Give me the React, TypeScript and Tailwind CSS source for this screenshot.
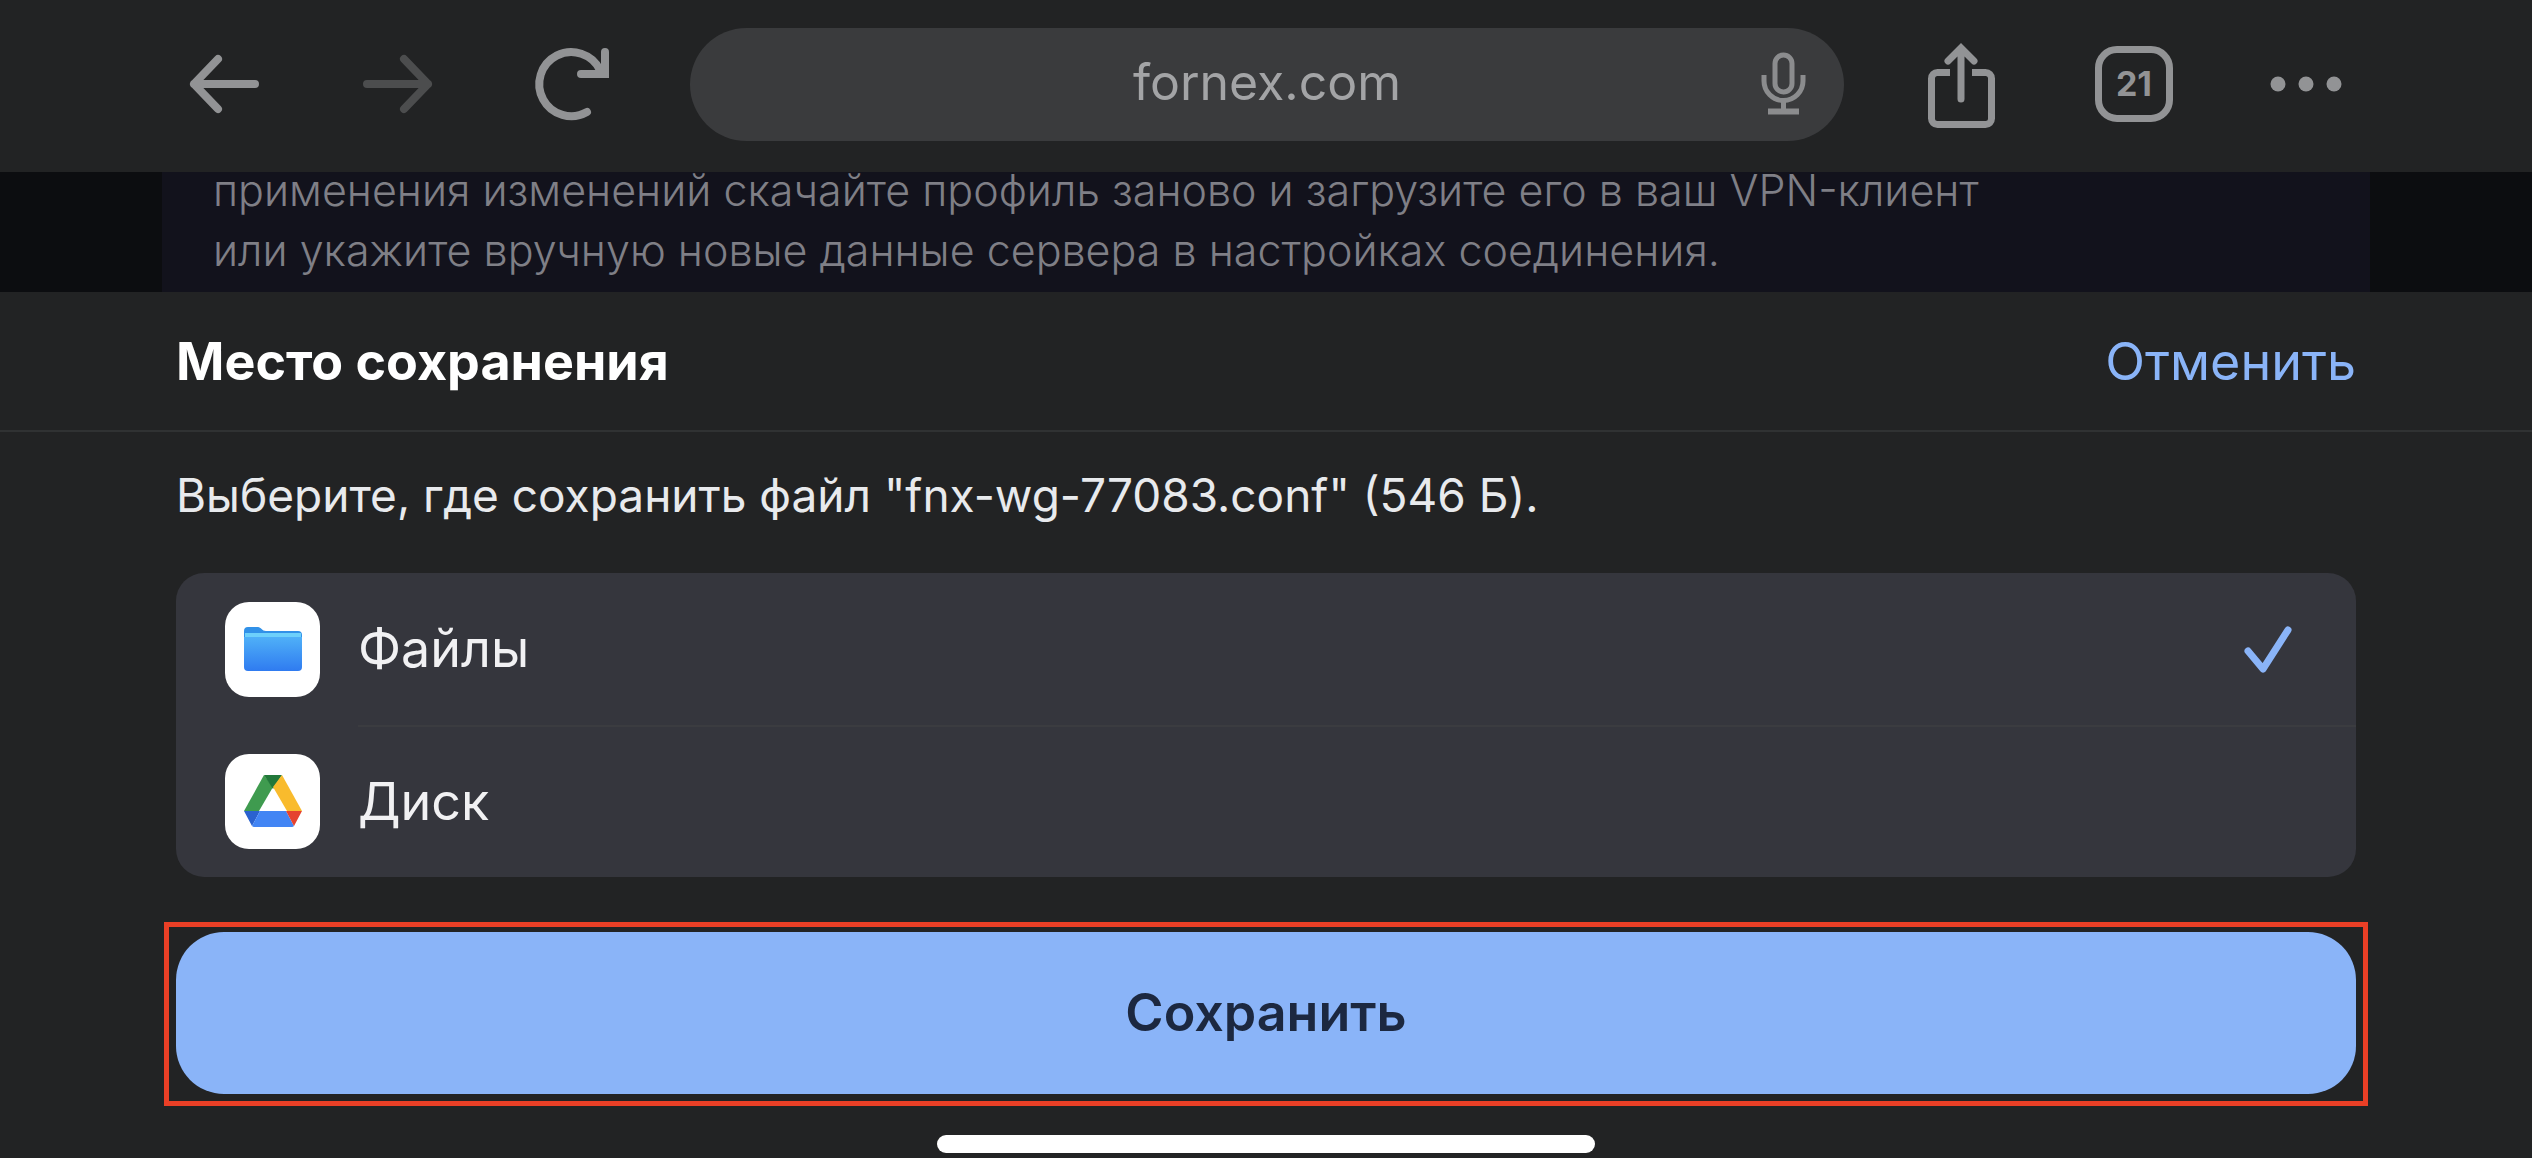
import React, { useState } from 'react';

const BackIcon = () => (
  <svg viewBox="0 0 80 96" className="w-20 h-24" fill="none" stroke="currentColor" strokeWidth="8" strokeLinecap="round" strokeLinejoin="round">
    <path d="M69 48H8M32 23L8 48l24 25" />
  </svg>
);

const ForwardIcon = () => (
  <svg viewBox="0 0 80 96" className="w-20 h-24" fill="none" stroke="currentColor" strokeWidth="8" strokeLinecap="round" strokeLinejoin="round">
    <path d="M8 48h61M45 23l24 25-24 25" />
  </svg>
);

const ReloadIcon = () => (
  <svg viewBox="0 0 80 96" className="w-20 h-24" fill="none" stroke="currentColor" strokeWidth="8" strokeLinecap="round">
    <path d="M55 76A32 32 0 1 1 68 34" />
    <path d="M73 16v22H49" strokeLinejoin="miter" />
    <path d="M74 24v15H59z" fill="currentColor" stroke="none" />
  </svg>
);

const MicIcon = () => (
  <svg viewBox="0 0 48 64" className="w-12 h-16" fill="none" stroke="currentColor" strokeWidth="5">
    <rect x="15" y="3" width="17" height="37" rx="8.5" />
    <path d="M4 23v6a19.5 19.5 0 0 0 39 0v-6" />
    <path d="M23.500 48v9" />
    <path d="M8 59.500h31" strokeWidth="6" />
  </svg>
);

const ShareIcon = () => (
  <svg viewBox="0 0 80 96" className="w-20 h-24" fill="none" stroke="currentColor" strokeWidth="7">
    <path d="M28 36.500H15.500a6 6 0 0 0-6 6v40a6 6 0 0 0 6 6h48a6 6 0 0 0 6-6v-40a6 6 0 0 0-6-6H50" />
    <path d="M39 13v50M26 25l13-13 13 13" strokeLinecap="round" />
  </svg>
);

const MoreIcon = () => (
  <svg viewBox="0 0 80 96" className="w-20 h-24" fill="currentColor">
    <circle cx="12" cy="48" r="7.5" />
    <circle cx="40" cy="48" r="7.5" />
    <circle cx="68" cy="48" r="7.5" />
  </svg>
);

const FolderIcon = () => (
  <svg viewBox="0 0 58 44" className="w-[58px] h-11">
    <defs>
      <linearGradient id="folder" x1="0" y1="0" x2="0" y2="1">
        <stop offset="0" stopColor="#4fb0f8" />
        <stop offset="1" stopColor="#2f7bf0" />
      </linearGradient>
    </defs>
    <path d="M0 4a4 4 0 0 1 4-4h10c3 0 4 4 8 4h32a4 4 0 0 1 4 4v10H0z" fill="#3191e8" />
    <path d="M1 6h56v6H1z" fill="#6dd0fb" />
    <path d="M0 10h58v30a4 4 0 0 1-4 4H4a4 4 0 0 1-4-4z" fill="url(#folder)" />
  </svg>
);

const DriveIcon = () => (
  <svg viewBox="0 0 58 52" className="w-[58px] h-[52px]">
    <path d="M20 0L0 36h15l14-24z" fill="#3f9b4f" />
    <path d="M20 0h18l-9 14z" fill="#22783a" />
    <path d="M38 0l20 36H43L29 12z" fill="#f9bb2d" />
    <path d="M0 36h16L8 51z" fill="#2a62cf" />
    <path d="M16 36h26l8 15q-1 1-2 1H10q-1 0-2-1z" fill="#4285f4" />
    <path d="M42 36h16l-8 15z" fill="#e5432f" />
  </svg>
);

const places = [
  { id: 'files', label: 'Файлы', icon: <FolderIcon /> },
  { id: 'drive', label: 'Диск', icon: <DriveIcon /> },
];

const App = () => {
  const [place, setPlace] = useState('files');

  return (
    <div className="min-h-screen flex flex-col bg-[#222324] font-['Inter','Liberation_Sans',sans-serif]">
      <header className="h-[172px] px-[186px] pb-1 flex items-center gap-[78px] text-[#929395]">
        <nav className="flex gap-[93px]">
          <button aria-label="Назад"><BackIcon /></button>
          <button aria-label="Вперёд" className="text-[#4c4d4e]"><ForwardIcon /></button>
          <button aria-label="Обновить"><ReloadIcon /></button>
        </nav>
        <div className="flex-1 min-w-0 h-[113px] px-9 rounded-full bg-[#3a3b3d] flex items-center">
          <input
            aria-label="Адрес"
            defaultValue="fornex.com"
            className="flex-1 min-w-0 pl-12 pb-1 bg-transparent text-center text-[50px] text-[#a3a4a6] outline-none"
          />
          <button aria-label="Голосовой поиск" className="text-[#8b8c8e]"><MicIcon /></button>
        </div>
        <div className="flex items-center gap-[93px]">
          <button aria-label="Поделиться"><ShareIcon /></button>
          <button className="w-[78px] h-[76px] rounded-[22px] border-[7px] border-[#929395] text-[34px] leading-none font-bold">21</button>
          <button aria-label="Ещё"><MoreIcon /></button>
        </div>
      </header>

      <div className="h-[120px] px-[162px] bg-[#0c0d10] flex">
        <div className="flex-1 px-[51px] bg-[#12121c] flex items-end">
          <p className="pb-3 text-[43px] leading-[60px] font-light text-[#7f7f86]">
            применения изменений скачайте профиль заново и загрузите его в ваш VPN-клиент
            <br />
            или укажите вручную новые данные сервера в настройках соединения.
          </p>
        </div>
      </div>

      <main className="flex-1 flex flex-col">
        <div className="h-[140px] px-[176px] pt-0.5 flex items-center justify-between border-b-2 border-[#303233]">
          <h1 className="text-[52px] font-bold text-white">Место сохранения</h1>
          <button className="text-[52px] text-[#8ab4f8]">Отменить</button>
        </div>

        <p className="px-[176px] pt-[35px] pb-[50px] text-[46px] leading-[56px] text-[#e8eaed]">
          Выберите, где сохранить файл "fnx-wg-77083.conf" (546 Б).
        </p>

        <div role="radiogroup" aria-label="Место сохранения" className="mx-[176px] rounded-[28px] bg-[#35363d]">
          {places.map((item, i) => (
            <label key={item.id} htmlFor={item.id} className="flex items-center pl-[49px] gap-[38px]">
              <input
                type="radio"
                id={item.id}
                name="place"
                className="sr-only"
                checked={place === item.id}
                onChange={() => setPlace(item.id)}
              />
              <span className="size-[95px] rounded-3xl bg-white flex items-center justify-center">{item.icon}</span>
              <span className={`flex-1 h-[152px] pr-16 flex items-center justify-between ${i > 0 ? 'border-t-2 border-[#3b3c40]' : ''}`}>
                <span className="text-[52px] text-[#f1f1f3]">{item.label}</span>
                {place === item.id && (
                  <svg viewBox="0 0 48 48" className="size-12 text-[#8ab4f8]" fill="none" stroke="currentColor" strokeWidth="7" strokeLinecap="round" strokeLinejoin="round">
                    <path d="M4 26l15 18L44 5" />
                  </svg>
                )}
              </span>
            </label>
          ))}
        </div>

        <div className="mx-[164px] mt-[45px] px-[7px] pt-[5px] pb-[7px] border-[5px] border-[#ea3f26]">
          <button className="block w-full h-[162px] rounded-[48px] bg-[#8ab4f8] text-[52px] font-semibold text-[#1c2840]">Сохранить</button>
        </div>

        <div className="mt-[29px] mb-1 mx-auto w-[26%] h-[18px] rounded-full bg-white" />
      </main>
    </div>
  );
};

export default App;
